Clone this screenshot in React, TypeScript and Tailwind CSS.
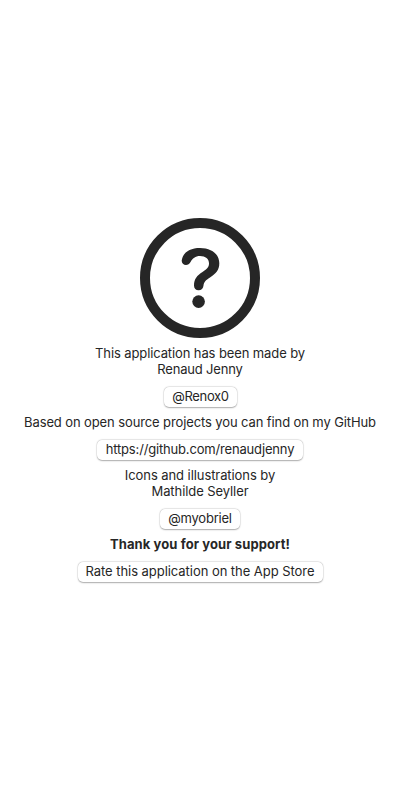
import React from 'react';

function Pill({ children, className }: { children: React.ReactNode; className: string }) {
  return (
    <button className={`h-5 shrink-0 rounded-[5px] bg-white pb-0.5 text-center leading-[18px] whitespace-nowrap shadow-[0_0_0_0.5px_rgba(0,0,0,0.08),0_0.5px_1.5px_rgba(0,0,0,0.3)] ${className}`}>
      {children}
    </button>
  );
}

export default function App() {
  return (
    <main className="flex h-[800px] w-[400px] flex-col items-center bg-white pt-[218px] font-['Inter',sans-serif] text-[13px] leading-4 text-[#262626]">
      <svg className="h-[120px] w-[120px] shrink-0" viewBox="0 0 120 120" fill="#262626">
        <circle cx="60" cy="60" r="55" fill="none" stroke="#262626" strokeWidth="10" />
        <path d="M41.7 42.5C43 34 50 29.9 60 29.9C71.5 29.9 79.3 36 79.3 45.3C79.3 52 76 55.8 70 59.5C65.5 62.3 64 64 63.5 67.5C63.2 70.5 61.5 72.3 58.6 72.3C55.8 72.3 54 70.5 54 67.5C54 61 57 57.5 62.5 54C67.5 51 69 49 69 45.3C69 41 65.5 38 60 38C55.3 38 52.5 40.5 50.7 43.7C49.3 46 48 47 46 47C43.5 47 41.6 45 41.7 42.5Z" />
        <circle cx="58.6" cy="83.6" r="6.3" />
      </svg>
      <p className="mt-[7px] text-center tracking-[-0.11px]">This application has been made by<br /><span className="tracking-[-0.18px]">Renaud Jenny</span></p>
      <Pill className="mt-2.5 ml-px w-[73px] tracking-[-0.35px]">@Renox0</Pill>
      <p className="mt-[7px] whitespace-nowrap tracking-[-0.11px]">Based on open source projects you can find on my GitHub</p>
      <Pill className="mt-2.5 w-[206px] tracking-[-0.17px]">https://github.com/renaudjenny</Pill>
      <p className="mt-[7px] text-center tracking-[-0.08px]">Icons and illustrations by<br />Mathilde Seyller</p>
      <Pill className="mt-2.5 w-20 tracking-[-0.22px]">@myobriel</Pill>
      <p className="mt-[7px] font-bold tracking-[0.1px]">Thank you for your support!</p>
      <Pill className="mt-2.5 w-[245px] tracking-[-0.05px]">Rate this application on the App Store</Pill>
    </main>
  );
}
